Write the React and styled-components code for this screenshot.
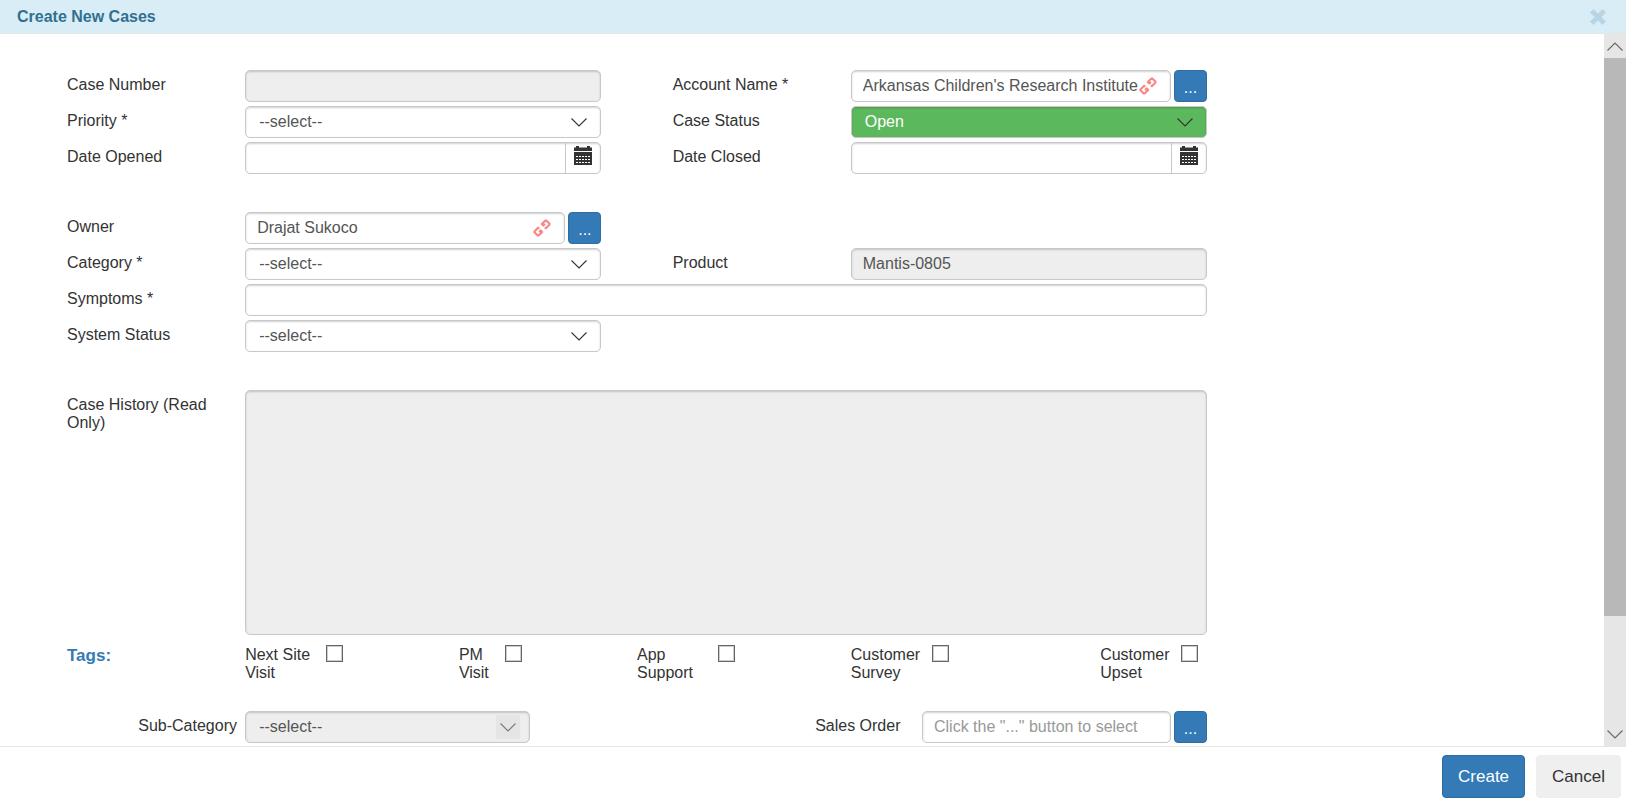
import React from "react";
import { useState } from "react";
import styled, { createGlobalStyle, css } from "styled-components";

const OPTIONS = {
    priority: ["Low", "Medium", "High"],
    category: ["Hardware", "Software"],
    systemStatus: ["Up", "Down"],
};

function Chevron({ up }) {
    return (
        <svg width="16" height="9" viewBox="0 0 16 9" fill="none" stroke="currentColor" strokeWidth="1.1" aria-hidden="true">
            <path d={up ? "M0.5 8.5 8 1 15.5 8.5" : "M0.5 0.5 8 8 15.5 0.5"} />
        </svg>
    );
}

function CalendarIcon() {
    return (
        <svg width="18" height="19" viewBox="0 0 18 19" aria-hidden="true">
            <path fill="#333" d="M2 0h3v1.5h8V0h3v1.5h2V5H0V1.5h2zM0 6h18v13H0z" />
            <path stroke="#fff" strokeWidth="1" strokeDasharray="2 1" d="M2 10.5h14M2 13.5h14M2 16.5h14" />
        </svg>
    );
}

function UnlinkIcon() {
    return (
        <svg width="18" height="18" viewBox="-9 -9 18 18" fill="none" stroke="#fb8585" strokeWidth="2.1" strokeLinejoin="round" aria-hidden="true">
            <g transform="rotate(-45)">
                <path d="M5 -0.8H2.6V-2.9H7.8L8.4 -2.3V2.3L7.8 2.9H2.6V1.4" />
                <path d="M-5 0.8H-2.6V2.9H-7.8L-8.4 2.3V-2.3L-7.8 -2.9H-2.6V-1.4" />
            </g>
        </svg>
    );
}

function SelectField({ id, columns, options = [], tone, disabled, first = "--select--" }) {
    return (
        <SelectBox $columns={columns} $tone={tone} $disabled={disabled}>
            <select id={id} disabled={disabled}>
                <option>{first}</option>
                {options.map((o) => <option key={o}>{o}</option>)}
            </select>
            <span><Chevron /></span>
        </SelectBox>
    );
}

function DateField({ id, columns }) {
    return (
        <DateBox $columns={columns}>
            <input id={id} type="text" />
            <button type="button" aria-label="Pick a date"><CalendarIcon /></button>
        </DateBox>
    );
}

function LookupField({ id, columns, value, placeholder }) {
    const [text, setText] = useState(value || "");

    return (
        <LookupGroup $columns={columns}>
            <LookupBox>
                <input id={id} type="text" value={text} placeholder={placeholder} onChange={(e) => setText(e.target.value)} />
                {text && <button type="button" aria-label="Unlink" onClick={() => setText("")}><UnlinkIcon /></button>}
            </LookupBox>
            <LookupButton type="button">...</LookupButton>
        </LookupGroup>
    );
}

function Tag({ id, labelColumns, checkColumns, children }) {
    return (
        <>
            <Label htmlFor={id} $columns={labelColumns}>{children}</Label>
            <CheckCell $columns={checkColumns}>
                <Checkbox id={id} type="checkbox" />
            </CheckCell>
        </>
    );
}

export default function App() {
    return (
        <>
            <GlobalStyle />
            <Dialog>
                <Header>
                    <h1>Create New Cases</h1>
                    <button type="button" aria-label="Close">
                        <svg width="16" height="16" viewBox="0 0 16 16" aria-hidden="true">
                            <path d="M3.5 0 8 4.5 12.5 0 16 3.5 11.5 8 16 12.5 12.5 16 8 11.5 3.5 16 0 12.5 4.5 8 0 3.5z" fill="currentColor" />
                        </svg>
                    </button>
                </Header>
                <Body>
                    <Scroller>
                        <Form>
                            <Section>
                                <Label htmlFor="number" $columns="1 / 6">Case Number</Label>
                                <TextInput id="number" type="text" readOnly $columns="6 / 16" />
                                <Label htmlFor="account" $columns="18 / 23">Account Name *</Label>
                                <LookupField id="account" columns="23 / 33" value="Arkansas Children's Research Institute" />

                                <Label htmlFor="priority" $columns="1 / 6">Priority *</Label>
                                <SelectField id="priority" columns="6 / 16" options={OPTIONS.priority} />
                                <Label htmlFor="status" $columns="18 / 23">Case Status</Label>
                                <SelectField id="status" columns="23 / 33" first="Open" options={["Closed"]} tone="green" />

                                <Label htmlFor="opened" $columns="1 / 6">Date Opened</Label>
                                <DateField id="opened" columns="6 / 16" />
                                <Label htmlFor="closed" $columns="18 / 23">Date Closed</Label>
                                <DateField id="closed" columns="23 / 33" />
                            </Section>

                            <Section>
                                <Label htmlFor="owner" $columns="1 / 6">Owner</Label>
                                <LookupField id="owner" columns="6 / 16" value="Drajat Sukoco" />

                                <Label htmlFor="category" $columns="1 / 6">Category *</Label>
                                <SelectField id="category" columns="6 / 16" options={OPTIONS.category} />
                                <Label htmlFor="product" $columns="18 / 23">Product</Label>
                                <TextInput id="product" type="text" readOnly defaultValue="Mantis-0805" $columns="23 / 33" />

                                <Label htmlFor="symptoms" $columns="1 / 6">Symptoms *</Label>
                                <TextInput id="symptoms" type="text" $columns="6 / 33" />

                                <Label htmlFor="system" $columns="1 / 6">System Status</Label>
                                <SelectField id="system" columns="6 / 16" options={OPTIONS.systemStatus} />
                            </Section>

                            <History>
                                <Label htmlFor="history" $columns="1 / 6">Case History (Read Only)</Label>
                                <TextArea id="history" readOnly $columns="6 / 33" />
                            </History>

                            <Tags>
                                <TagsTitle>Tags:</TagsTitle>
                                <Tag id="next-site" labelColumns="6 / 8" checkColumns="8 / 9">Next Site Visit</Tag>
                                <Tag id="pm" labelColumns="12 / 13" checkColumns="13 / 14">PM Visit</Tag>
                                <Tag id="app" labelColumns="17 / 19" checkColumns="19 / 20">App Support</Tag>
                                <Tag id="survey" labelColumns="23 / 25" checkColumns="25 / 26">Customer Survey</Tag>
                                <Tag id="upset" labelColumns="30 / 32" checkColumns="32 / 33">Customer Upset</Tag>
                            </Tags>

                            <Section>
                                <Label htmlFor="sub" $columns="3 / 6">Sub-Category</Label>
                                <SelectField id="sub" columns="6 / 14" disabled />
                                <Label htmlFor="order" $columns="22 / 25">Sales Order</Label>
                                <LookupField id="order" columns="25 / 33" placeholder={'Click the "..." button to select'} />
                            </Section>
                        </Form>
                    </Scroller>
                    <ScrollBar>
                        <button type="button" aria-label="Scroll up"><Chevron up /></button>
                        <ScrollTrack><ScrollThumb /></ScrollTrack>
                        <button type="button" aria-label="Scroll down"><Chevron /></button>
                    </ScrollBar>
                </Body>
                <Footer>
                    <ActionButton type="button" $primary>Create</ActionButton>
                    <ActionButton type="button">Cancel</ActionButton>
                </Footer>
            </Dialog>
        </>
    );
}

// ::::::::::Styled-Components::::::::::
const GlobalStyle = createGlobalStyle`
    *{
        box-sizing: border-box;
    }
    body{
        margin: 0;
        background-color: #FFFFFF;
        color: #333333;
        font: 16px/18px "Liberation Sans", Arial, sans-serif;
    }
    button, input, select, textarea{
        margin: 0;
        font: inherit;
        color: inherit;
    }
    button{
        cursor: pointer;
    }
`
const Dialog = styled.div`
    display: flex;
    flex-direction: column;
    height: 100vh;
`
const Header = styled.header`
    display: flex;
    justify-content: space-between;
    align-items: center;
    height: 34px;
    padding: 0 20px 0 17px;
    background-color: #D9EDF7;
    border-bottom: 1px solid #E5E5E5;

    h1{
        margin: 0;
        font-size: 16px;
        color: #31708F;
    }
    button{
        display: flex;
        padding: 0;
        border: none;
        background: none;
        color: #B9D5E3;
    }
`
const Body = styled.main`
    display: flex;
    flex: 1;
    min-height: 0;
`
const Scroller = styled.div`
    flex: 1;
    overflow: hidden;
`
const Form = styled.form`
    display: flex;
    flex-direction: column;
    margin: 36px 397px 0 67px;
`
const columnGrid = css`
    display: grid;
    grid-template-columns: repeat(32, minmax(0, 1fr));
    align-items: start;
`
const Section = styled.div`
    ${columnGrid}
    row-gap: 4px;
    margin-bottom: 38px;
`
const History = styled.div`
    ${columnGrid}
`
const Tags = styled.div`
    ${columnGrid}
    margin: 5px 0 29px;
`
const Label = styled.label`
    grid-column: ${(props) => props.$columns};
    padding-top: 6px;
`
const fieldBox = css`
    height: 32px;
    border: 1px solid #C8C8C8;
    border-radius: 5px;
    background-color: #FFFFFF;
    color: #555555;
    box-shadow: inset 0 1px 2px rgba(0, 0, 0, 0.18);
`
const TextInput = styled.input`
    ${fieldBox}
    grid-column: ${(props) => props.$columns};
    width: 100%;
    padding: 0 11px;

    &:read-only{
        background-color: #EEEEEE;
    }
`
const TextArea = styled.textarea`
    ${fieldBox}
    grid-column: ${(props) => props.$columns};
    display: block;
    width: 100%;
    height: 245px;
    padding: 6px 11px;
    background-color: #EEEEEE;
    resize: none;
`
const SelectBox = styled.div`
    ${fieldBox}
    grid-column: ${(props) => props.$columns};
    display: grid;
    align-items: center;
    background-color: ${(props) => props.$tone === "green" ? "#5CB85C" : props.$disabled ? "#EEEEEE" : "#FFFFFF"};
    color: ${(props) => props.$tone === "green" ? "#FFFFFF" : "#555555"};

    select{
        grid-area: 1 / 1;
        width: 100%;
        height: 30px;
        padding: 0 40px 0 13px;
        border: none;
        background: none;
        appearance: none;
        opacity: 1;
    }
    option{
        color: #555555;
    }
    span{
        grid-area: 1 / 1;
        justify-self: end;
        display: flex;
        justify-content: center;
        align-items: center;
        width: 24px;
        height: 24px;
        margin-right: 9px;
        background-color: ${(props) => props.$disabled ? "#E5E5E5" : "transparent"};
        color: ${(props) => props.$disabled ? "#777777" : "#333333"};
        pointer-events: none;
    }
`
const DateBox = styled.div`
    ${fieldBox}
    grid-column: ${(props) => props.$columns};
    display: flex;

    input{
        flex: 1;
        min-width: 0;
        padding: 0 11px;
        border: none;
        background: none;
    }
    button{
        display: flex;
        justify-content: center;
        width: 35px;
        padding: 3px 0 0;
        border: none;
        border-left: 1px solid #C8C8C8;
        background: none;
    }
`
const LookupGroup = styled.div`
    grid-column: ${(props) => props.$columns};
    display: flex;
    gap: 3px;
`
const LookupBox = styled.div`
    ${fieldBox}
    flex: 1;
    display: flex;
    align-items: center;
    min-width: 0;
    padding: 0 13px 0 11px;

    input{
        flex: 1;
        min-width: 0;
        padding: 0;
        border: none;
        background: none;
    }
    input::placeholder{
        color: #999999;
    }
    button{
        display: flex;
        padding: 0;
        border: none;
        background: none;
    }
`
const LookupButton = styled.button`
    width: 33px;
    height: 32px;
    padding: 4px 0 0;
    border: 1px solid #2E6DA4;
    border-radius: 4px;
    background-color: #337AB7;
    color: #FFFFFF;
`
const TagsTitle = styled.h2`
    grid-column: 1 / 6;
    margin: 0;
    padding-top: 7px;
    font-size: 17px;
    color: #337AB7;
`
const CheckCell = styled.div`
    grid-column: ${(props) => props.$columns};
    padding: 5px 0 0 10px;
`
const Checkbox = styled.input`
    display: block;
    width: 17px;
    height: 17px;
    border: 1px solid #666666;
    background-color: #FFFFFF;
    box-shadow: inset 0 0 0 1px #CCCCCC;
    appearance: none;

    &:checked{
        background-color: #337AB7;
    }
`
const ScrollBar = styled.div`
    display: flex;
    flex-direction: column;
    width: 22px;
    background-color: #E6E6E6;

    button{
        display: flex;
        justify-content: center;
        align-items: center;
        height: 24px;
        padding: 0;
        border: none;
        background: none;
        color: #666666;
    }
`
const ScrollTrack = styled.div`
    flex: 1;
`
const ScrollThumb = styled.div`
    height: 84%;
    background-color: #B8B8B8;
`
const Footer = styled.footer`
    display: flex;
    justify-content: flex-end;
    gap: 11px;
    padding: 8px 5px 2px;
    border-top: 1px solid #E5E5E5;
`
const ActionButton = styled.button`
    height: 43px;
    padding: 0 15px;
    border: 1px solid ${(props) => props.$primary ? "#2E6DA4" : "#EEEEEE"};
    border-radius: 4px;
    background-color: ${(props) => props.$primary ? "#337AB7" : "#EFEFEF"};
    color: ${(props) => props.$primary ? "#FFFFFF" : "#333333"};
    font-size: 17px;
`
